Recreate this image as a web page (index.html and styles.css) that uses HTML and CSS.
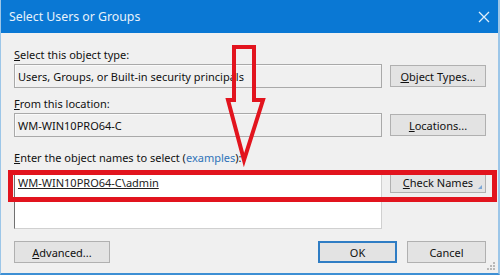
FILE: index.html
```html
<!DOCTYPE html>
<html>
<head>
<meta charset="utf-8">
<link rel="stylesheet" href="styles.css">
</head>
<body>
<div class="window">
  <div class="titlebar">
    <span class="title">Select Users or Groups</span>
    <svg class="close" width="12" height="12" viewBox="0 0 12 12"><path d="M1 1L11 11M11 1L1 11" stroke="#dfeefa" stroke-width="1.3" fill="none"/></svg>
  </div>
  <div class="content">
    <div class="label l1"><u>S</u>elect this object type:</div>
    <div class="row">
      <div class="field ro">Users, Groups, or Built-in security principals</div>
      <div class="btn"><u>O</u>bject Types...</div>
    </div>
    <div class="label l2"><u>F</u>rom this location:</div>
    <div class="row">
      <div class="field ro">WM-WIN10PRO64-C</div>
      <div class="btn"><u>L</u>ocations...</div>
    </div>
    <div class="label l3"><u>E</u>nter the object names to select (<span class="link">examples</span>):</div>
    <div class="row top">
      <div class="field names"><u>WM-WIN10PRO64-C\admin</u></div>
      <div class="btn check"><u>C</u>heck Names<span class="mark"></span></div>
    </div>
    <div class="footer">
      <div class="btn"><u>A</u>dvanced...</div>
      <div class="right">
        <div class="btn ok">OK</div>
        <div class="btn">Cancel</div>
      </div>
    </div>
  </div>
  <div class="redbox"></div>
  <svg class="arrow" width="60" height="130" viewBox="0 0 60 130">
    <polygon points="16,5 36,5 36,58 45,58 26,118 10,58 16,58" fill="none" stroke="#e2141e" stroke-width="4" stroke-linejoin="miter"/>
  </svg>
  <svg class="grip" width="10" height="10" viewBox="0 0 10 10">
    <g fill="#b8b8b8"><rect x="7" y="1" width="2" height="2"/><rect x="4" y="4" width="2" height="2"/><rect x="7" y="4" width="2" height="2"/><rect x="1" y="7" width="2" height="2"/><rect x="4" y="7" width="2" height="2"/><rect x="7" y="7" width="2" height="2"/></g>
  </svg>
</div>
</body>
</html>
```

FILE: styles.css
```css
html, body {
  margin: 0;
  padding: 0;
  background: #f0f0f0;
}
.window {
  position: relative;
  width: 500px;
  height: 275px;
  box-sizing: border-box;
  background: #f0f0f0;
  border-left: 1px solid #9cc6e8;
  border-right: 2px solid #9cc6e8;
  border-bottom: 2px solid #3d8fd4;
  font-family: "Noto Sans", "Open Sans", sans-serif;
  font-size: 11px;
  color: #111;
  overflow: hidden;
}
.titlebar {
  height: 33px;
  background: #0a78d4;
  display: flex;
  align-items: center;
  justify-content: space-between;
  padding: 0 10px 0 9px;
  margin: 0 -2px 0 -1px;
}
.title {
  color: #e8f2fb;
  font-size: 12.3px;
}
.content {
  padding: 0 12px 0 13px;
  display: flex;
  flex-direction: column;
}
.label {
  line-height: 16px;
  height: 16px;
  white-space: nowrap;
}
.l1 { margin-top: 14px; }
.l2 { margin-top: 8px; }
.l3 { margin-top: 13px; }
.link { color: #2f73b8; }
.row {
  display: flex;
  gap: 8px;
  align-items: center;
  margin-top: 1px;
}
.row.top {
  align-items: flex-start;
  margin-top: 4px;
}
.field {
  width: 368px;
  height: 24px;
  box-sizing: border-box;
  border: 1px solid #a9a9a9;
  padding: 0 3px;
  display: flex;
  align-items: center;
  white-space: nowrap;
  overflow: hidden;
}
.field.ro {
  background: #f0f0f0;
  box-shadow: inset 1px 1px 0 #fafafa;
}
.field.names {
  background: #fff;
  height: 59px;
  align-items: flex-start;
  padding-top: 4px;
  border-color: #d0d0d0;
  border-left: 1px solid #707070;
  color: #222;
}
.btn {
  position: relative;
  width: 96px;
  height: 22px;
  box-sizing: border-box;
  background: #e3e3e3;
  border: 1px solid #b0b0b0;
  display: flex;
  align-items: center;
  justify-content: center;
  white-space: nowrap;
}
.btn.check {
  margin-top: 1px;
}
.mark {
  position: absolute;
  right: 3px;
  bottom: 3px;
  width: 0;
  height: 0;
  border-left: 4px solid transparent;
  border-bottom: 4px solid #7aa6d6;
}
.footer {
  margin-top: 12px;
  display: flex;
  justify-content: space-between;
}
.right {
  display: flex;
  gap: 10px;
}
.right .btn {
  width: 79px;
}
.btn.ok {
  border: 2px solid #2f7dc4;
}
.redbox {
  position: absolute;
  left: 7px;
  top: 170px;
  width: 489px;
  height: 32px;
  box-sizing: border-box;
  border: 5px solid #e2141e;
}
.arrow {
  position: absolute;
  left: 217px;
  top: 42px;
}
.grip {
  position: absolute;
  right: 2px;
  bottom: 2px;
}
```
